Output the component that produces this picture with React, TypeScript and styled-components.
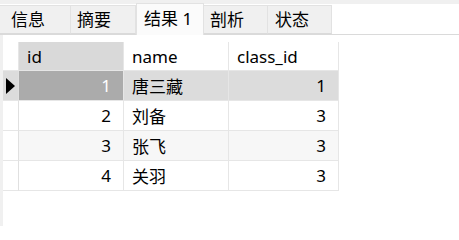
import React from "react";
import styled, { createGlobalStyle } from "styled-components";

const Global = createGlobalStyle`
  html, body { margin: 0; padding: 0; background: #ffffff; }
  body {
    font-family: "Noto Sans", "Noto Sans CJK SC", sans-serif;
    font-size: 17px;
    color: #000;
    width: 459px;
    height: 226px;
    overflow: hidden;
  }
`;

const Page = styled.div`
  display: flex;
  flex-direction: column;
  width: 459px;
  height: 226px;
`;

const TopStrip = styled.div`
  height: 4px;
  background: #f0f0f0;
`;

const TabBar = styled.div`
  display: flex;
  align-items: flex-end;
  height: 31px;
  border-bottom: 1px solid #dadada;
  box-sizing: border-box;
  background: #ffffff;
`;

const Tab = styled.div<{ $active?: boolean; $w: number; $pad: number }>`
  box-sizing: border-box;
  width: ${(p) => p.$w}px;
  height: ${(p) => (p.$active ? 32 : 29)}px;
  margin-bottom: ${(p) => (p.$active ? -1 : 0)}px;
  padding-left: ${(p) => p.$pad}px;
  display: flex;
  align-items: center;
  background: ${(p) => (p.$active ? "#fbfbfb" : "#f0f0f0")};
  border: 1px solid #e2e2e2;
  border-left: ${(p) => (p.$active ? "1px solid #e2e2e2" : "none")};
  border-bottom: ${(p) => (p.$active ? "none" : "1px solid #dadada")};
  font-size: 17px;
  line-height: 1;
  white-space: nowrap;
  padding-bottom: ${(p) => (p.$active ? 3 : 0)}px;
`;

const Body = styled.div`
  flex: 1;
  display: flex;
`;

const LeftStrip = styled.div`
  width: 3px;
  background: #f0f0f0;
`;

const GridWrap = styled.div`
  padding-top: 7px;
`;

const Grid = styled.div`
  display: grid;
  grid-template-columns: 16px 105px 105px 110px;
  grid-auto-rows: 30px;
  grid-template-rows: 29px;
`;

const HeadCell = styled.div<{ $selected?: boolean }>`
  box-sizing: border-box;
  display: flex;
  align-items: center;
  padding-left: 8px;
  background: ${(p) => (p.$selected ? "#d9d9d9" : "#ffffff")};
  border-right: 1px solid #e6e6e6;
  border-bottom: 1px solid #e6e6e6;
`;

const Indicator = styled.div<{ $bg: string }>`
  box-sizing: border-box;
  display: flex;
  align-items: center;
  justify-content: center;
  background: ${(p) => p.$bg};
  border-right: 1px solid #e0e0e0;
  border-bottom: 1px solid #e6e6e6;
`;

const Cell = styled.div<{ $bg: string; $right?: boolean; $focus?: boolean }>`
  box-sizing: border-box;
  display: flex;
  align-items: center;
  justify-content: ${(p) => (p.$right ? "flex-end" : "flex-start")};
  padding: ${(p) => (p.$right ? "0 12px 0 0" : "0 0 0 8px")};
  background: ${(p) => (p.$focus ? "#ababab" : p.$bg)};
  color: ${(p) => (p.$focus ? "#ffffff" : "#000000")};
  border-right: 1px solid #e6e6e6;
  border-bottom: 1px solid #e6e6e6;
  white-space: nowrap;
`;

const Arrow = () => (
  <svg width="9" height="16" viewBox="0 0 9 16">
    <path d="M0 0 L9 8 L0 16 Z" fill="#000" />
  </svg>
);

const tabs = [
  { label: "信息", w: 71, pad: 11 },
  { label: "摘要", w: 65, pad: 6 },
  { label: "结果 1", w: 68, pad: 7, active: true },
  { label: "剖析", w: 64, pad: 6 },
  { label: "状态", w: 64, pad: 7 },
];

const rows = [
  { id: 1, name: "唐三藏", cls: 1 },
  { id: 2, name: "刘备", cls: 3 },
  { id: 3, name: "张飞", cls: 3 },
  { id: 4, name: "关羽", cls: 3 },
];

export default function App() {
  return (
    <Page>
      <Global />
      <TopStrip />
      <TabBar>
        {tabs.map((t) => (
          <Tab key={t.label} $w={t.w} $pad={t.pad} $active={t.active}>
            {t.label}
          </Tab>
        ))}
      </TabBar>
      <Body>
        <LeftStrip />
        <GridWrap>
          <Grid>
            <HeadCell />
            <HeadCell $selected>id</HeadCell>
            <HeadCell>name</HeadCell>
            <HeadCell>class_id</HeadCell>
            {rows.map((r, i) => {
              const bg = i === 0 ? "#dcdcdc" : i === 2 ? "#f7f7f7" : "#ffffff";
              return (
                <React.Fragment key={r.id}>
                  <Indicator $bg={i === 0 ? "#dcdcdc" : "#ffffff"}>
                    {i === 0 && <Arrow />}
                  </Indicator>
                  <Cell $bg={bg} $right $focus={i === 0}>
                    {r.id}
                  </Cell>
                  <Cell $bg={bg}>{r.name}</Cell>
                  <Cell $bg={bg} $right>
                    {r.cls}
                  </Cell>
                </React.Fragment>
              );
            })}
          </Grid>
        </GridWrap>
      </Body>
    </Page>
  );
}
